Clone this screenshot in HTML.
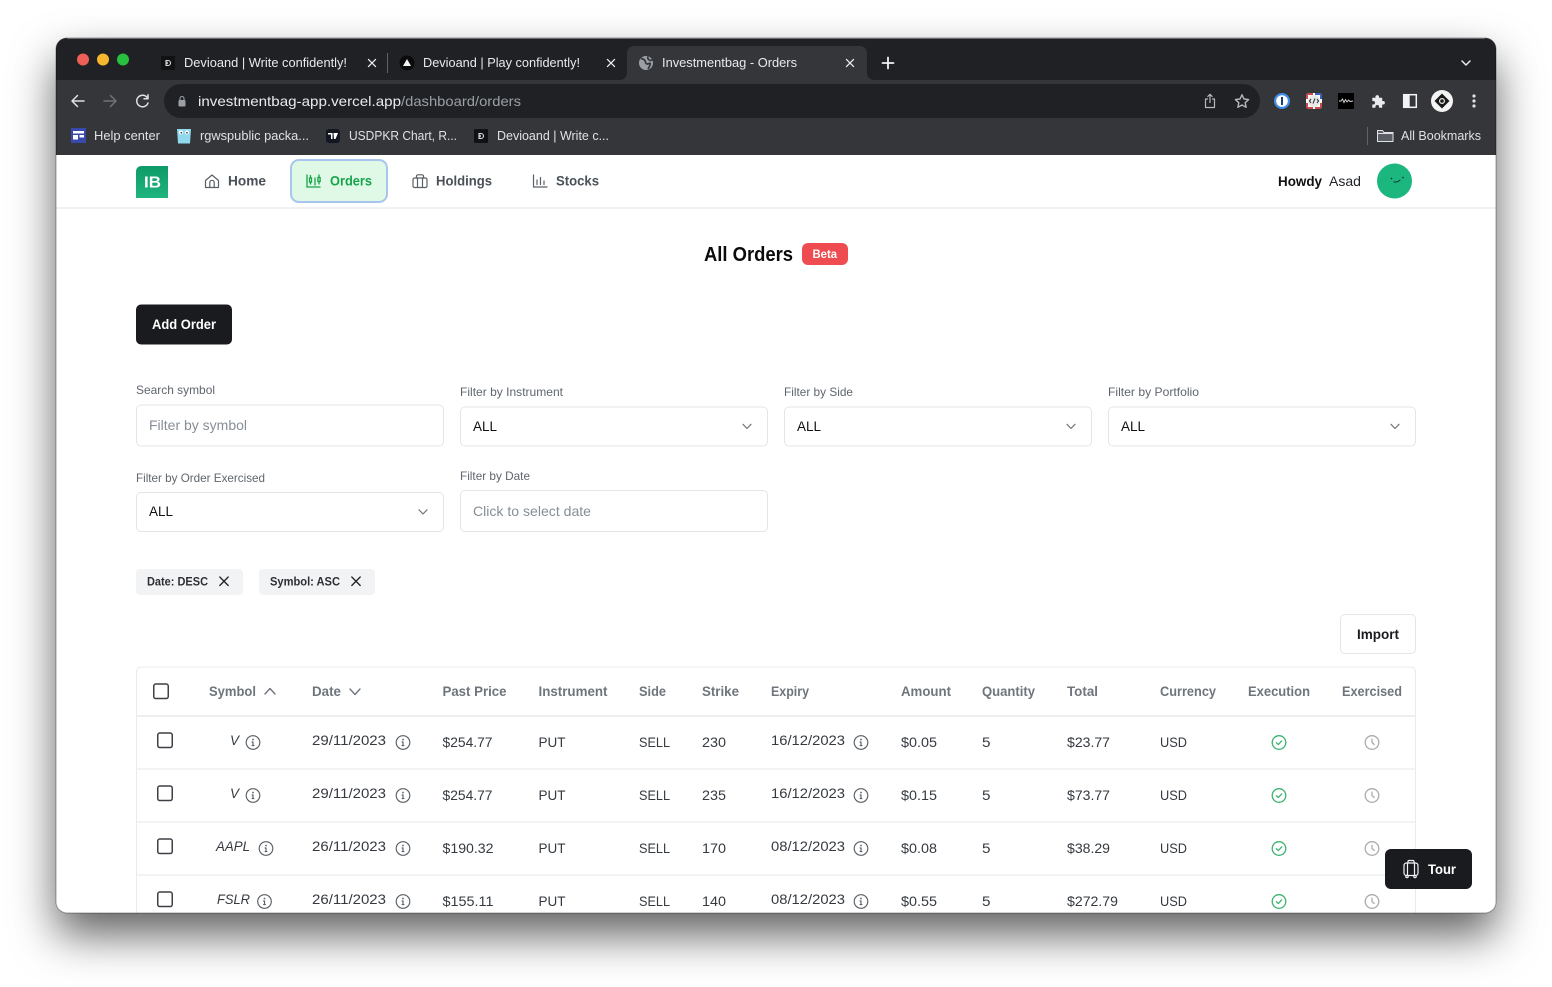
<!DOCTYPE html>
<html lang="en"><head><meta charset="utf-8"><title>Investmentbag - Orders</title>
<style>
html,body{margin:0;padding:0;background:#fff;width:1552px;height:987px;overflow:hidden}
#sh{position:absolute;left:56px;top:38px;width:1440px;height:875px;border-radius:11px;box-shadow:0 22px 44px rgba(0,0,0,.62)}
svg{position:absolute;left:0;top:0;display:block;filter:blur(.3px)}
text{font-family:"Liberation Sans",sans-serif;font-size:14px;fill:#343a40;white-space:pre}
.c{font-size:13px;fill:#e8eaed}
.b{font-size:12.5px;fill:#dfe1e5}
.n{font-weight:700;fill:#495057}
.l{font-size:12px;fill:#5f666d}
.h{font-weight:700;fill:#6f757c}
.w{font-weight:700;fill:#fff}
.p{fill:#868e96}
.i{font-style:italic}
.ic{fill:none;stroke:#5a6067;stroke-width:1.2;stroke-linecap:round;stroke-linejoin:round}
</style></head><body>
<div id="sh"></div>
<svg width="1552" height="987" viewBox="0 0 1552 987" xmlns="http://www.w3.org/2000/svg">
<defs>
<clipPath id="win"><rect x="56" y="38" width="1440" height="875" rx="11"/></clipPath>
<linearGradient id="lg" x1="0" y1="0" x2="0" y2="1"><stop offset="0" stop-color="#0e9a68"/><stop offset="1" stop-color="#1fb57f"/></linearGradient>
<g id="info" fill="none" stroke="#5a6067" stroke-width="1.15" stroke-linecap="round"><circle r="6.8"/><path d="M0-.5V3M-.9-.5H0M-.9 3.1H.9"/><circle cx="0" cy="-3" r=".35"/></g>
<g id="ok" fill="none" stroke="#3cb371" stroke-width="1.3" stroke-linecap="round" stroke-linejoin="round"><circle r="6.8"/><path d="M-2.6 .2L-.7 2.1 2.7-1.6"/></g>
<g id="clock" fill="none" stroke="#a9acaf" stroke-width="1.3" stroke-linecap="round" stroke-linejoin="round"><circle r="6.8"/><path d="M0-3.4V0L2.2 2"/></g>
<g id="cb"><rect x=".75" y=".75" width="14.5" height="14.5" rx="2" fill="#fff" stroke="#3d4044" stroke-width="1.5"/></g>
<g id="dn"><path d="M-4-2.2L0 2 4-2.2" fill="none" stroke="#6f757c" stroke-width="1.2" stroke-linecap="round" stroke-linejoin="round"/></g>
<g id="x"><path d="M-4.2-4.2L4.2 4.2M4.2-4.2L-4.2 4.2" fill="none" stroke="#e8eaed" stroke-width="1.5" stroke-linecap="round"/></g>
<g id="dfav"><rect x="-7" y="-7" width="14" height="14" fill="#111214"/><path d="M-2-2.5H0A2.5 2.5 0 0 1 0 2.5H-2ZM-.8-1.2V1.2" fill="none" stroke="#ddd" stroke-width="1.1"/></g>
</defs>
<g clip-path="url(#win)">
<rect x="56" y="38" width="1440" height="875" fill="#fff"/>
<!-- browser chrome -->
<rect x="56" y="38" width="1440" height="43" fill="#202124"/>
<rect x="56" y="80" width="1440" height="75" fill="#35363a"/>
<path d="M619 80Q627 80 627 72V54Q627 46 635 46H859Q867 46 867 54V72Q867 80 875 80Z" fill="#35363a"/>
<circle cx="83" cy="59.5" r="6" fill="#ed5f57"/><circle cx="103" cy="59.5" r="6" fill="#f5b82e"/><circle cx="123" cy="59.5" r="6" fill="#28c03f"/>
<use href="#dfav" x="168" y="63"/>
<text class="c" x="184" y="67" textLength="163" lengthAdjust="spacingAndGlyphs">Devioand | Write confidently!</text>
<use href="#x" transform="translate(372 63) scale(.85)"/>
<rect x="387" y="53" width="1" height="20" fill="#5f6368"/>
<circle cx="407" cy="63" r="7.5" fill="#0b0b0c"/><path d="M407 59L411 66H403Z" fill="#f1f3f4"/>
<text class="c" x="423" y="67" textLength="157" lengthAdjust="spacingAndGlyphs">Devioand | Play confidently!</text>
<use href="#x" transform="translate(611 63) scale(.85)"/>
<circle cx="646" cy="63" r="7" fill="#9aa0a6"/><path d="M641 58.5Q645 59 645.500 62T649 63.500 648 69M648 56.500Q647 59 650 60.500L652.500 60" fill="none" stroke="#35363a" stroke-width="1.700"/>
<text class="c" x="662" y="67" textLength="135" lengthAdjust="spacingAndGlyphs">Investmentbag - Orders</text>
<use href="#x" transform="translate(850 63) scale(.85)"/>
<path d="M888 57.500V68.500M882.500 63H893.500" stroke="#f1f3f4" stroke-width="1.800" stroke-linecap="round"/>
<path d="M1462 61L1466 65 1470 61" fill="none" stroke="#e8eaed" stroke-width="1.500" stroke-linecap="round" stroke-linejoin="round"/>
<g fill="none" stroke-width="1.500" stroke-linecap="round" stroke-linejoin="round">
<path d="M84 101H72.500M77.500 95.500L72 101 77.500 106.500" stroke="#dfe1e5"/>
<path d="M104 101H115.500M110.500 95.500L116 101 110.500 106.500" stroke="#6f7377"/>
<path d="M147.500 98A5.800 5.800 0 1 0 148 103M148 94.800V98.800H144" stroke="#dfe1e5"/>
</g>
<rect x="164" y="84" width="1096" height="34" rx="17" fill="#202124"/>
<rect x="178.500" y="100" width="7" height="6.500" rx="1" fill="#9aa0a6"/><path d="M180 100V98.500A2 2 0 0 1 184 98.500V100" fill="none" stroke="#9aa0a6" stroke-width="1.100"/>
<text x="198" y="106" font-size="14" style="fill:#e8eaed" textLength="203" lengthAdjust="spacingAndGlyphs">investmentbag-app.vercel.app</text>
<text x="401" y="106" style="fill:#9aa0a6" textLength="120" lengthAdjust="spacingAndGlyphs">/dashboard/orders</text>
<g fill="none" stroke="#b5b8bc" stroke-width="1.200" stroke-linecap="round" stroke-linejoin="round">
<path d="M1207.500 99H1205.500V107.500H1214.500V99H1212.500M1210 102.500V94.500M1207.800 96.500L1210 94.300 1212.200 96.500"/>
<path d="M1242 94.800L1244 99 1248.600 99.600 1245.200 102.700 1246.100 107.300 1242 105 1237.900 107.300 1238.800 102.700 1235.400 99.600 1240 99Z" stroke-width="1.400"/>
</g>
<circle cx="1282" cy="101" r="8" fill="#3f8fe8"/><circle cx="1282" cy="101" r="5.800" fill="#fff"/><rect x="1281" y="97" width="2" height="8" fill="#1d3f73"/>
<rect x="1306" y="93" width="16" height="16" rx="3" fill="#fff"/><path d="M1306 96Q1306 93 1309 93H1313V95H1308V99H1306ZM1322 106Q1322 109 1319 109H1315V107H1320V103H1322Z" fill="#c94a4a"/><path d="M1315 93H1319Q1322 93 1322 96V99H1320V95H1315Z" fill="#3b5fb5"/><path d="M1306 103H1308V107H1313V109H1309Q1306 109 1306 106Z" fill="#c94a4a"/><circle cx="1314" cy="101" r="6" fill="#e8e8e8"/><path d="M1311 99L1309.500 101 1311 103M1317 99L1318.500 101 1317 103M1315 98.500L1313 103.500" fill="none" stroke="#222" stroke-width="1"/>
<rect x="1338" y="93" width="16" height="16" fill="#000"/><path d="M1339 101L1341 101 1342.500 99 1344 102.500 1345.500 99.500 1347 102 1348.500 100 1350 101.500 1353 101" fill="none" stroke="#ddd" stroke-width=".9"/>
<path d="M1372 97H1375.500V96A2 2 0 0 1 1379.500 96V97H1383V100.500H1384A2 2 0 0 1 1384 104.500H1383V108H1379.500V107A2 2 0 0 0 1375.500 107V108H1372V104.500H1373A2 2 0 0 0 1373 100.500H1372Z" fill="#e8eaed" transform="translate(137.500 10.500) scale(.9)"/>
<rect x="1403.700" y="94.700" width="12.600" height="12.600" fill="#35363a" stroke="#f1f3f4" stroke-width="1.500"/><rect x="1403.700" y="94.700" width="6" height="12.600" fill="#f1f3f4"/>
<circle cx="1442" cy="101" r="11" fill="#f4f4f4"/><path d="M1442 93.500L1449.500 101 1442 108.500 1434.500 101Z" fill="#1a1a1a"/><circle cx="1442" cy="101" r="2.400" fill="none" stroke="#eee" stroke-width="1.200"/>
<circle cx="1474" cy="96" r="1.600" fill="#dfe1e5"/><circle cx="1474" cy="101" r="1.600" fill="#dfe1e5"/><circle cx="1474" cy="106" r="1.600" fill="#dfe1e5"/>
<rect x="71" y="128" width="15" height="15" fill="#3949ab"/><rect x="73" y="131" width="11" height="2.500" fill="#fff"/><rect x="73" y="135" width="5" height="4.500" fill="#fff"/><rect x="79.500" y="135" width="4.500" height="2.500" fill="#fff"/>
<text class="b" x="94" y="140" textLength="66" lengthAdjust="spacingAndGlyphs">Help center</text>
<path d="M177 129H191L190 143.500H178Z" fill="#8fd8ee"/><circle cx="181" cy="132.500" r="2" fill="#fff"/><circle cx="187" cy="132.500" r="2" fill="#fff"/><circle cx="181.300" cy="132.800" r=".8" fill="#223"/><circle cx="187" cy="132.800" r=".8" fill="#223"/>
<text class="b" x="200" y="140" textLength="109" lengthAdjust="spacingAndGlyphs">rgwspublic packa...</text>
<rect x="326" y="129" width="14" height="14" rx="3" fill="#131722"/><path d="M328 133H332.500V139H331V134.500H328ZM333.500 133H338L335.500 139H334Z" fill="#fff"/>
<text class="b" x="349" y="140" textLength="108" lengthAdjust="spacingAndGlyphs">USDPKR Chart, R...</text>
<use href="#dfav" x="481" y="136"/>
<text class="b" x="497" y="140" textLength="112" lengthAdjust="spacingAndGlyphs">Devioand | Write c...</text>
<rect x="1367" y="127" width="1" height="18" fill="#5f6368"/>
<path d="M1377.500 131V141.500H1393V132.500H1384L1382.500 130.500H1377.500Z" fill="#5a5d63" stroke="#dfe1e5" stroke-width="1"/><path d="M1378 133.500H1393" stroke="#dfe1e5" stroke-width="1"/>
<text class="b" x="1401" y="140" textLength="80" lengthAdjust="spacingAndGlyphs">All Bookmarks</text>
<!-- nav -->
<rect x="56" y="155" width="1440" height="758" fill="#fff"/>
<rect x="56" y="207" width="1440" height="2" fill="#f0f1f3"/>
<path d="M136 198V172Q136 166 142 166H168V198Z" fill="url(#lg)"/>
<text x="144" y="187.500" class="w" font-size="16" style="font-size:16px" textLength="17" lengthAdjust="spacingAndGlyphs">IB</text>
<g class="ic"><path d="M205.500 180.500L212 175 218.500 180.500V187.500H205.500ZM209.800 187.500V182.500A2.200 2.200 0 0 1 214.200 182.500V187.500"/></g>
<text class="n" x="228" y="185.500" textLength="38" lengthAdjust="spacingAndGlyphs">Home</text>
<rect x="291" y="160" width="96" height="42" rx="8" fill="#dff9e6" stroke="#a8c5ee" stroke-width="2"/>
<g fill="none" stroke="#16a34a" stroke-width="1.300" stroke-linecap="round"><path d="M307 175V187H320M310.500 175.500V184M315 178V185M319 175V184"/><rect x="309.500" y="178" width="2" height="4" fill="#dff9e6"/><rect x="317.900" y="177.500" width="2.200" height="4" fill="#dff9e6"/></g>
<text class="n" x="330" y="185.500" style="fill:#16a34a" textLength="42" lengthAdjust="spacingAndGlyphs">Orders</text>
<g class="ic"><rect x="413" y="178" width="14" height="9.500" rx="1.500"/><path d="M416.500 178V176A1.500 1.500 0 0 1 418 174.800H422A1.500 1.500 0 0 1 423.500 176V178M417.500 178V187.500M422.500 178V187.500"/></g>
<text class="n" x="436" y="185.500" textLength="56" lengthAdjust="spacingAndGlyphs">Holdings</text>
<g class="ic"><path d="M533.500 175V187H547M537 180V184.500M540.500 177.500V184.500M544 181V184.500"/></g>
<text class="n" x="556" y="185.500" textLength="43" lengthAdjust="spacingAndGlyphs">Stocks</text>
<text x="1278" y="186" style="font-weight:700;fill:#111" textLength="44" lengthAdjust="spacingAndGlyphs">Howdy</text>
<text x="1329" y="186" style="fill:#1f2226" textLength="32" lengthAdjust="spacingAndGlyphs">Asad</text>
<circle cx="1394.500" cy="181" r="17.500" fill="#1cb67f"/><circle cx="1391.500" cy="178.500" r=".8" fill="#123"/><circle cx="1403" cy="177.500" r=".8" fill="#123"/><path d="M1394 182Q1398 182.500 1400 180" fill="none" stroke="#123" stroke-width=".9" stroke-linecap="round"/>
<!-- heading -->
<text x="704" y="261" style="font-size:20px;font-weight:700;fill:#0b0b0c" textLength="89" lengthAdjust="spacingAndGlyphs">All Orders</text>
<rect x="802" y="243" width="46" height="22" rx="6" fill="#ee4c50"/>
<text x="812.500" y="258" class="w" style="font-size:11.500px" textLength="24.500" lengthAdjust="spacingAndGlyphs">Beta</text>
<rect x="136" y="304.500" width="96" height="40" rx="5" fill="#1a1b1e"/>
<text x="152" y="329" class="w" textLength="64" lengthAdjust="spacingAndGlyphs">Add Order</text>
<!-- filters -->
<text class="l" x="136" y="394" textLength="79" lengthAdjust="spacingAndGlyphs">Search symbol</text>
<text class="l" x="460" y="396" textLength="103" lengthAdjust="spacingAndGlyphs">Filter by Instrument</text>
<text class="l" x="784" y="396" textLength="69" lengthAdjust="spacingAndGlyphs">Filter by Side</text>
<text class="l" x="1108" y="396" textLength="91" lengthAdjust="spacingAndGlyphs">Filter by Portfolio</text>
<g fill="#fff" stroke="#e3e6e9">
<rect x="136.500" y="405" width="307" height="41" rx="4.500"/>
<rect x="460.500" y="407" width="307" height="39" rx="4.500"/>
<rect x="784.500" y="407" width="307" height="39" rx="4.500"/>
<rect x="1108.500" y="407" width="307" height="39" rx="4.500"/>
<rect x="136.500" y="492.500" width="307" height="39" rx="4.500"/>
<rect x="460.500" y="490.500" width="307" height="41" rx="4.500"/>
</g>
<text class="p" x="149" y="430" textLength="98" lengthAdjust="spacingAndGlyphs">Filter by symbol</text>
<text x="473" y="431" style="fill:#111" textLength="24" lengthAdjust="spacingAndGlyphs">ALL</text>
<text x="797" y="431" style="fill:#111" textLength="24" lengthAdjust="spacingAndGlyphs">ALL</text>
<text x="1121" y="431" style="fill:#111" textLength="24" lengthAdjust="spacingAndGlyphs">ALL</text>
<use href="#dn" x="747" y="426.500"/><use href="#dn" x="1071" y="426.500"/><use href="#dn" x="1395" y="426.500"/>
<text class="l" x="136" y="482" textLength="129" lengthAdjust="spacingAndGlyphs">Filter by Order Exercised</text>
<text class="l" x="460" y="480" textLength="70" lengthAdjust="spacingAndGlyphs">Filter by Date</text>
<text x="149" y="516" style="fill:#111" textLength="24" lengthAdjust="spacingAndGlyphs">ALL</text>
<use href="#dn" x="423" y="512"/>
<text class="p" x="473" y="516" textLength="118" lengthAdjust="spacingAndGlyphs">Click to select date</text>
<!-- chips -->
<rect x="136" y="569" width="107" height="26" rx="4" fill="#f1f3f5"/>
<text x="147" y="585.500" style="font-size:12px;font-weight:700;fill:#2b2f33" textLength="61" lengthAdjust="spacingAndGlyphs">Date: DESC</text>
<path d="M219.800 577L228.200 585.500M228.200 577L219.800 585.500" stroke="#222" stroke-width="1.300" stroke-linecap="round"/>
<rect x="259" y="569" width="116" height="26" rx="4" fill="#f1f3f5"/>
<text x="270" y="585.500" style="font-size:12px;font-weight:700;fill:#2b2f33" textLength="70" lengthAdjust="spacingAndGlyphs">Symbol: ASC</text>
<path d="M351.800 577L360.200 585.500M360.200 577L351.800 585.500" stroke="#222" stroke-width="1.300" stroke-linecap="round"/>
<rect x="1340.500" y="614.500" width="75" height="39" rx="4.500" fill="#fff" stroke="#e3e6e9"/>
<text x="1357" y="639" style="font-weight:700;fill:#1a1b1e" textLength="42" lengthAdjust="spacingAndGlyphs">Import</text>
<!-- table -->
<path d="M136.500 930V673Q136.500 667 142 667H1410Q1415.500 667 1415.500 673V930" fill="#fff" stroke="#e9ecef"/>
<rect x="137" y="715" width="1278" height="2" fill="#eceef0"/>
<rect x="137" y="768" width="1278" height="2" fill="#f1f3f5"/>
<rect x="137" y="821" width="1278" height="2" fill="#f1f3f5"/>
<rect x="137" y="874" width="1278" height="2" fill="#f1f3f5"/>
<use href="#cb" x="153" y="683.300"/>
<text class="h" x="209" y="696" textLength="47" lengthAdjust="spacingAndGlyphs">Symbol</text>
<path d="M265 694L270 688.500 275 694" fill="none" stroke="#6f757c" stroke-width="1.400" stroke-linecap="round" stroke-linejoin="round"/>
<text class="h" x="312" y="696" textLength="29" lengthAdjust="spacingAndGlyphs">Date</text>
<path d="M350 689L355 694.500 360 689" fill="none" stroke="#6f757c" stroke-width="1.400" stroke-linecap="round" stroke-linejoin="round"/>
<text class="h" x="442.500" y="696" textLength="64" lengthAdjust="spacingAndGlyphs">Past Price</text>
<text class="h" x="538.500" y="696" textLength="69" lengthAdjust="spacingAndGlyphs">Instrument</text>
<text class="h" x="639" y="696" textLength="27" lengthAdjust="spacingAndGlyphs">Side</text>
<text class="h" x="702" y="696" textLength="37" lengthAdjust="spacingAndGlyphs">Strike</text>
<text class="h" x="771" y="696" textLength="38" lengthAdjust="spacingAndGlyphs">Expiry</text>
<text class="h" x="901" y="696" textLength="50" lengthAdjust="spacingAndGlyphs">Amount</text>
<text class="h" x="982" y="696" textLength="53" lengthAdjust="spacingAndGlyphs">Quantity</text>
<text class="h" x="1067" y="696" textLength="31" lengthAdjust="spacingAndGlyphs">Total</text>
<text class="h" x="1160" y="696" textLength="56" lengthAdjust="spacingAndGlyphs">Currency</text>
<text class="h" x="1248" y="696" textLength="62" lengthAdjust="spacingAndGlyphs">Execution</text>
<text class="h" x="1342" y="696" textLength="60" lengthAdjust="spacingAndGlyphs">Exercised</text>
<!-- row 1 -->
<use href="#cb" x="157" y="732.300"/>
<text class="i" x="230" y="745" textLength="9" lengthAdjust="spacingAndGlyphs">V</text><use href="#info" x="253" y="742.500"/>
<text x="312" y="745" textLength="74" lengthAdjust="spacingAndGlyphs">29/11/2023</text><use href="#info" x="403" y="742.500"/>
<text x="442.500" y="747" textLength="50" lengthAdjust="spacingAndGlyphs">$254.77</text>
<text x="538.500" y="747" textLength="27" lengthAdjust="spacingAndGlyphs">PUT</text>
<text x="639" y="747" textLength="31" lengthAdjust="spacingAndGlyphs">SELL</text>
<text x="702" y="747" textLength="24" lengthAdjust="spacingAndGlyphs">230</text>
<text x="771" y="745" textLength="74" lengthAdjust="spacingAndGlyphs">16/12/2023</text><use href="#info" x="861" y="742.500"/>
<text x="901" y="747" textLength="36" lengthAdjust="spacingAndGlyphs">$0.05</text>
<text x="982" y="747" textLength="8.500" lengthAdjust="spacingAndGlyphs">5</text>
<text x="1067" y="747" textLength="43" lengthAdjust="spacingAndGlyphs">$23.77</text>
<text x="1160" y="747" textLength="27" lengthAdjust="spacingAndGlyphs">USD</text>
<use href="#ok" x="1279" y="742.500"/><use href="#clock" x="1372" y="742.500"/>
<!-- row 2 -->
<use href="#cb" x="157" y="785.300"/>
<text class="i" x="230" y="798" textLength="9" lengthAdjust="spacingAndGlyphs">V</text><use href="#info" x="253" y="795.500"/>
<text x="312" y="798" textLength="74" lengthAdjust="spacingAndGlyphs">29/11/2023</text><use href="#info" x="403" y="795.500"/>
<text x="442.500" y="800" textLength="50" lengthAdjust="spacingAndGlyphs">$254.77</text>
<text x="538.500" y="800" textLength="27" lengthAdjust="spacingAndGlyphs">PUT</text>
<text x="639" y="800" textLength="31" lengthAdjust="spacingAndGlyphs">SELL</text>
<text x="702" y="800" textLength="24" lengthAdjust="spacingAndGlyphs">235</text>
<text x="771" y="798" textLength="74" lengthAdjust="spacingAndGlyphs">16/12/2023</text><use href="#info" x="861" y="795.500"/>
<text x="901" y="800" textLength="36" lengthAdjust="spacingAndGlyphs">$0.15</text>
<text x="982" y="800" textLength="8.500" lengthAdjust="spacingAndGlyphs">5</text>
<text x="1067" y="800" textLength="43" lengthAdjust="spacingAndGlyphs">$73.77</text>
<text x="1160" y="800" textLength="27" lengthAdjust="spacingAndGlyphs">USD</text>
<use href="#ok" x="1279" y="795.500"/><use href="#clock" x="1372" y="795.500"/>
<!-- row 3 -->
<use href="#cb" x="157" y="838.300"/>
<text class="i" x="216" y="851" textLength="34" lengthAdjust="spacingAndGlyphs">AAPL</text><use href="#info" x="266" y="848.500"/>
<text x="312" y="851" textLength="74" lengthAdjust="spacingAndGlyphs">26/11/2023</text><use href="#info" x="403" y="848.500"/>
<text x="442.500" y="853" textLength="51" lengthAdjust="spacingAndGlyphs">$190.32</text>
<text x="538.500" y="853" textLength="27" lengthAdjust="spacingAndGlyphs">PUT</text>
<text x="639" y="853" textLength="31" lengthAdjust="spacingAndGlyphs">SELL</text>
<text x="702" y="853" textLength="24" lengthAdjust="spacingAndGlyphs">170</text>
<text x="771" y="851" textLength="74" lengthAdjust="spacingAndGlyphs">08/12/2023</text><use href="#info" x="861" y="848.500"/>
<text x="901" y="853" textLength="36" lengthAdjust="spacingAndGlyphs">$0.08</text>
<text x="982" y="853" textLength="8.500" lengthAdjust="spacingAndGlyphs">5</text>
<text x="1067" y="853" textLength="43" lengthAdjust="spacingAndGlyphs">$38.29</text>
<text x="1160" y="853" textLength="27" lengthAdjust="spacingAndGlyphs">USD</text>
<use href="#ok" x="1279" y="848.500"/><use href="#clock" x="1372" y="848.500"/>
<!-- row 4 -->
<use href="#cb" x="157" y="891.300"/>
<text class="i" x="217" y="904" textLength="33" lengthAdjust="spacingAndGlyphs">FSLR</text><use href="#info" x="264.500" y="901.500"/>
<text x="312" y="904" textLength="74" lengthAdjust="spacingAndGlyphs">26/11/2023</text><use href="#info" x="403" y="901.500"/>
<text x="442.500" y="906" textLength="51" lengthAdjust="spacingAndGlyphs">$155.11</text>
<text x="538.500" y="906" textLength="27" lengthAdjust="spacingAndGlyphs">PUT</text>
<text x="639" y="906" textLength="31" lengthAdjust="spacingAndGlyphs">SELL</text>
<text x="702" y="906" textLength="24" lengthAdjust="spacingAndGlyphs">140</text>
<text x="771" y="904" textLength="74" lengthAdjust="spacingAndGlyphs">08/12/2023</text><use href="#info" x="861" y="901.500"/>
<text x="901" y="906" textLength="36" lengthAdjust="spacingAndGlyphs">$0.55</text>
<text x="982" y="906" textLength="8.500" lengthAdjust="spacingAndGlyphs">5</text>
<text x="1067" y="906" textLength="51" lengthAdjust="spacingAndGlyphs">$272.79</text>
<text x="1160" y="906" textLength="27" lengthAdjust="spacingAndGlyphs">USD</text>
<use href="#ok" x="1279" y="901.500"/><use href="#clock" x="1372" y="901.500"/>
<!-- tour -->
<rect x="1385" y="849" width="87" height="40" rx="6" fill="#1a1b1e"/>
<g fill="none" stroke="#f1f3f5" stroke-width="1.200" stroke-linecap="round" stroke-linejoin="round"><rect x="1404" y="863" width="14" height="12.500" rx="2.500"/><path d="M1407.500 863V875.500M1414.500 863V875.500M1408 863V861.500Q1408 860.500 1409 860.500H1413Q1414 860.500 1414 861.500V863"/><circle cx="1407" cy="876.500" r="1.200"/><circle cx="1415" cy="876.500" r="1.200"/></g>
<text x="1428" y="874" class="w" textLength="28" lengthAdjust="spacingAndGlyphs">Tour</text>
</g>
<rect x="56" y="38" width="1440" height="875" rx="11" fill="none" stroke="#000" stroke-opacity=".35"/>
<path d="M67 38.500H1485" stroke="#6a6b6e" stroke-width="1"/>
</svg>
</body></html>
